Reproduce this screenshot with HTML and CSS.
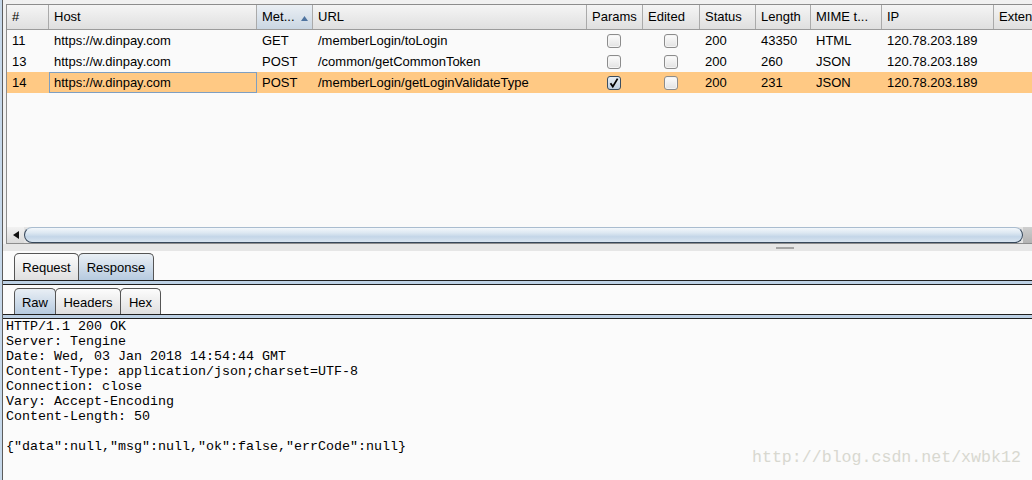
FILE: index.html
```html
<!DOCTYPE html>
<html>
<head>
<meta charset="utf-8">
<link rel="stylesheet" href="styles.css">
</head>
<body>
<div class="app">
  <div class="frame">
    <div class="table-pane">
      <div class="cols thead">
        <div class="th">#</div>
        <div class="th">Host</div>
        <div class="th sorted"><span>Met...</span><svg class="sort" width="7" height="5" viewBox="0 0 7 5"><polygon points="0,5 3.5,0 7,5" fill="#4f74a0"/></svg></div>
        <div class="th">URL</div>
        <div class="th">Params</div>
        <div class="th">Edited</div>
        <div class="th">Status</div>
        <div class="th">Length</div>
        <div class="th">MIME t...</div>
        <div class="th">IP</div>
        <div class="th">Exten</div>
      </div>
      <div class="cols tr">
        <div class="td">11</div>
        <div class="td">https://w.dinpay.com</div>
        <div class="td">GET</div>
        <div class="td">/memberLogin/toLogin</div>
        <div class="td check"><span class="cb"></span></div>
        <div class="td check"><span class="cb"></span></div>
        <div class="td">200</div>
        <div class="td">43350</div>
        <div class="td">HTML</div>
        <div class="td">120.78.203.189</div>
        <div class="td"></div>
      </div>
      <div class="cols tr">
        <div class="td">13</div>
        <div class="td">https://w.dinpay.com</div>
        <div class="td">POST</div>
        <div class="td">/common/getCommonToken</div>
        <div class="td check"><span class="cb"></span></div>
        <div class="td check"><span class="cb"></span></div>
        <div class="td">200</div>
        <div class="td">260</div>
        <div class="td">JSON</div>
        <div class="td">120.78.203.189</div>
        <div class="td"></div>
      </div>
      <div class="cols tr sel">
        <div class="td">14</div>
        <div class="td focus">https://w.dinpay.com</div>
        <div class="td">POST</div>
        <div class="td">/memberLogin/getLoginValidateType</div>
        <div class="td check"><span class="cb on"><svg width="12" height="12" viewBox="0 0 12 12"><path d="M2.5 6.2 L4.8 9.6 L9.6 1.6" fill="none" stroke="#000" stroke-width="1.8"/></svg></span></div>
        <div class="td check"><span class="cb"></span></div>
        <div class="td">200</div>
        <div class="td">231</div>
        <div class="td">JSON</div>
        <div class="td">120.78.203.189</div>
        <div class="td"></div>
      </div>
      <div class="fill"></div>
      <div class="hscroll">
        <div class="sb-btn"><svg width="6" height="8" viewBox="0 0 6 8"><polygon points="6,0 6,8 0,4" fill="#111"/></svg></div>
        <div class="sb-thumb"></div>
        <div class="sb-end"></div>
      </div>
    </div>
    <div class="divider"><div class="grip"></div></div>
    <div class="detail">
      <div class="tabs main-tabs">
        <div class="tab w-req">Request</div>
        <div class="tab active w-resp">Response</div>
      </div>
      <div class="rule"></div>
      <div class="tabs sub-tabs">
        <div class="tab active w-raw">Raw</div>
        <div class="tab w-hdr">Headers</div>
        <div class="tab w-hex">Hex</div>
      </div>
      <div class="rule"></div>
<pre class="raw">HTTP/1.1 200 OK
Server: Tengine
Date: Wed, 03 Jan 2018 14:54:44 GMT
Content-Type: application/json;charset=UTF-8
Connection: close
Vary: Accept-Encoding
Content-Length: 50

{"data":null,"msg":null,"ok":false,"errCode":null}</pre>
    </div>
  </div>
  <div class="watermark">http://blog.csdn.net/xwbk12</div>
</div>
</body>
</html>
```
FILE: styles.css
```css
html, body {
  margin: 0;
  padding: 0;
}
body {
  width: 1032px;
  height: 480px;
  overflow: hidden;
  font-family: "Liberation Sans", Arial, sans-serif;
  font-size: 13px;
  color: #000;
}
.app {
  position: relative;
  display: flex;
  height: 480px;
  box-sizing: border-box;
  border-left: 2px solid #c6d8ea;
  background: #f1f1f1;
}
.frame {
  flex: 1;
  min-width: 0;
  display: flex;
  flex-direction: column;
  border-left: 1px solid #5c5c5c;
}
.table-pane {
  flex: none;
  margin: 4px -20px 0 3px;
  height: 240px;
  box-sizing: border-box;
  border: 1px solid #8d8d8d;
  background: #fafafa;
  display: flex;
  flex-direction: column;
  overflow: hidden;
}
.cols {
  display: grid;
  grid-template-columns: 42px 208px 56px 274px 56px 57px 56px 55px 71px 112px 80px;
  flex: none;
}
.thead {
  height: 25px;
  box-sizing: border-box;
  border-bottom: 1px solid #9b9b9b;
  background: linear-gradient(#f5f5f5, #dfdfdf);
}
.th {
  box-sizing: border-box;
  border-right: 1px solid #aaaaaa;
  padding: 0 5px;
  line-height: 24px;
  white-space: nowrap;
  overflow: hidden;
  display: flex;
  align-items: center;
  justify-content: space-between;
}
.th.sorted {
  padding-right: 4px;
  background: linear-gradient(#eaeff4, #cad6e2);
}
.sort {
  margin-top: 2px;
}
.tr {
  height: 21px;
  line-height: 21px;
}
.tr.sel {
  background: #ffc984;
}
.td {
  box-sizing: border-box;
  padding-left: 5px;
  white-space: nowrap;
  overflow: hidden;
}
.td.focus {
  border: 1px solid #7e9fc2;
  padding-left: 4px;
  line-height: 19px;
}
.td.check {
  display: flex;
  align-items: center;
  justify-content: center;
  padding: 0 2px 0 0;
}
.cb {
  width: 14px;
  height: 14px;
  box-sizing: border-box;
  border: 1px solid #8c8c8c;
  border-radius: 3px;
  background: linear-gradient(#fdfdfd, #e2e2e2);
  box-shadow: inset 0 0 0 1px #f4f4f4;
  display: flex;
  align-items: center;
  justify-content: center;
}
.cb.on {
  border-color: #3a4d60;
  background: linear-gradient(#e6edf4, #bfcfe0);
  box-shadow: none;
}
.fill {
  flex: 1;
}
.hscroll {
  flex: none;
  height: 16px;
  display: flex;
  background: #e4e4e4;
}
.sb-btn {
  width: 17px;
  flex: none;
  display: flex;
  align-items: center;
  justify-content: center;
  background: linear-gradient(#f2f2f2, #dadada);
}
.sb-thumb {
  flex: none;
  width: 999px;
  box-sizing: border-box;
  border: 1px solid #36475a;
  border-top-color: #a9bccf;
  border-radius: 8px;
  background: linear-gradient(#f3f7fb 0%, #dde8f2 35%, #c4d6e8 62%, #d8e4f0 100%);
}
.sb-end {
  flex: 1;
  background: linear-gradient(#cfcfcf, #b3b3b3);
}
.divider {
  flex: none;
  height: 7px;
  background: #e6e6e6;
  display: flex;
  align-items: center;
}
.grip {
  margin-left: 773px;
  width: 18px;
  height: 2px;
  background: #a4a4a4;
}
.detail {
  flex: 1;
  background: #fbfbfb;
  display: flex;
  flex-direction: column;
}
.tabs {
  display: flex;
  padding-left: 11px;
  flex: none;
}
.main-tabs {
  padding-top: 2px;
}
.main-tabs .tab {
  height: 27px;
}
.sub-tabs {
  padding-top: 3px;
}
.sub-tabs .tab {
  height: 26px;
}
.tab {
  box-sizing: border-box;
  border: 1px solid #555;
  border-bottom: none;
  border-radius: 5px 5px 0 0;
  background: linear-gradient(#fcfcfc, #dfdfdf);
  display: flex;
  align-items: center;
  justify-content: center;
  padding-top: 1px;
}
.tab + .tab {
  margin-left: -1px;
}
.tab.active {
  background: linear-gradient(#e9eff5, #b6cadf);
}
.w-req { width: 65px; }
.w-resp { width: 76px; }
.w-raw { width: 42px; }
.w-hdr { width: 66px; }
.w-hex { width: 41px; }
.rule {
  flex: none;
  height: 5px;
  box-sizing: border-box;
  border-top: 1px solid #1f1f1f;
  border-bottom: 1px solid #1f1f1f;
  background: #bdd1e5;
}
.raw {
  margin: 0;
  padding: 0 0 0 3px;
  font-family: "Liberation Mono", "Courier New", monospace;
  font-size: 13.33px;
  line-height: 15px;
  color: #000;
}
.watermark {
  position: absolute;
  left: 750px;
  top: 448px;
  font-family: "Liberation Mono", monospace;
  font-size: 16.6px;
  line-height: 20px;
  color: #d8d8d0;
  white-space: nowrap;
}
```
